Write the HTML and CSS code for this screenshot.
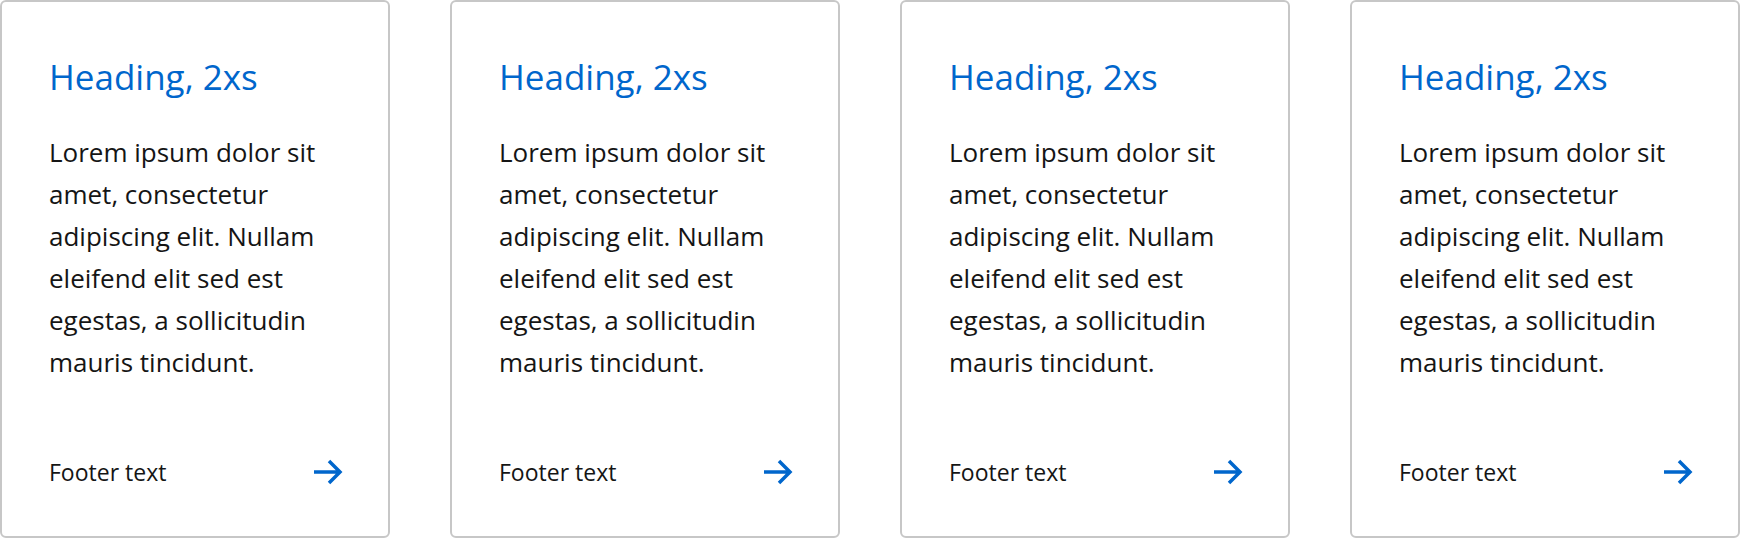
FILE: index.html
```html
<!DOCTYPE html>
<html lang="en">
<head>
    <meta charset="UTF-8">
    <meta name="viewport" content="width=device-width, initial-scale=1.0">
    <title>Cards</title>
    <link rel="stylesheet" href="styles.css">
</head>
<body>

    <div class="cards">
        <div class="card">
            <h3>Heading, 2xs</h3>
            <p>Lorem ipsum dolor sit amet, consectetur adipiscing elit. Nullam eleifend elit sed est egestas, a sollicitudin mauris tincidunt.</p>
            <div class="card-footer">
                <span>Footer text</span>
                <a href="#" class="arrow" aria-label="Go">
                    <svg viewBox="0 0 30 30" width="30" height="30"><path d="M1 15H27M16 4L27 15L16 26" fill="none" stroke="currentColor" stroke-width="3.5"/></svg>
                </a>
            </div>
        </div>

        <div class="card">
            <h3>Heading, 2xs</h3>
            <p>Lorem ipsum dolor sit amet, consectetur adipiscing elit. Nullam eleifend elit sed est egestas, a sollicitudin mauris tincidunt.</p>
            <div class="card-footer">
                <span>Footer text</span>
                <a href="#" class="arrow" aria-label="Go">
                    <svg viewBox="0 0 30 30" width="30" height="30"><path d="M1 15H27M16 4L27 15L16 26" fill="none" stroke="currentColor" stroke-width="3.5"/></svg>
                </a>
            </div>
        </div>

        <div class="card">
            <h3>Heading, 2xs</h3>
            <p>Lorem ipsum dolor sit amet, consectetur adipiscing elit. Nullam eleifend elit sed est egestas, a sollicitudin mauris tincidunt.</p>
            <div class="card-footer">
                <span>Footer text</span>
                <a href="#" class="arrow" aria-label="Go">
                    <svg viewBox="0 0 30 30" width="30" height="30"><path d="M1 15H27M16 4L27 15L16 26" fill="none" stroke="currentColor" stroke-width="3.5"/></svg>
                </a>
            </div>
        </div>

        <div class="card">
            <h3>Heading, 2xs</h3>
            <p>Lorem ipsum dolor sit amet, consectetur adipiscing elit. Nullam eleifend elit sed est egestas, a sollicitudin mauris tincidunt.</p>
            <div class="card-footer">
                <span>Footer text</span>
                <a href="#" class="arrow" aria-label="Go">
                    <svg viewBox="0 0 30 30" width="30" height="30"><path d="M1 15H27M16 4L27 15L16 26" fill="none" stroke="currentColor" stroke-width="3.5"/></svg>
                </a>
            </div>
        </div>
    </div>

</body>
</html>
```

FILE: styles.css
```css
html, body {
    margin: 0;
    height: 100%;
}

body {
    font-family: "Open Sans", "Noto Sans", sans-serif;
    color: #151515;
    background: #ffffff;
}

.cards {
    display: flex;
    gap: 60px;
    height: 538px;
}

/* one card */
.card {
    flex: 0 0 390px;
    display: flex;
    flex-direction: column;
    box-sizing: border-box;
    border: 2px solid #c7c7c7;
    border-radius: 6px;
    padding: 52px 46px 46px 47px;
}

.card h3 {
    margin: 0;
    font-size: 35px;
    font-weight: 400;
    line-height: 46px;
    color: #0066cc;
}

.card p {
    margin: 31px 0 0;
    font-size: 26px;
    line-height: 42px;
}

.card-footer {
    margin-top: auto;
    display: flex;
    align-items: center;
    justify-content: space-between;
    font-size: 23px;
    line-height: 36px;
}

.arrow {
    display: flex;
    color: #0066cc;
    margin-right: -1px;
}
```
